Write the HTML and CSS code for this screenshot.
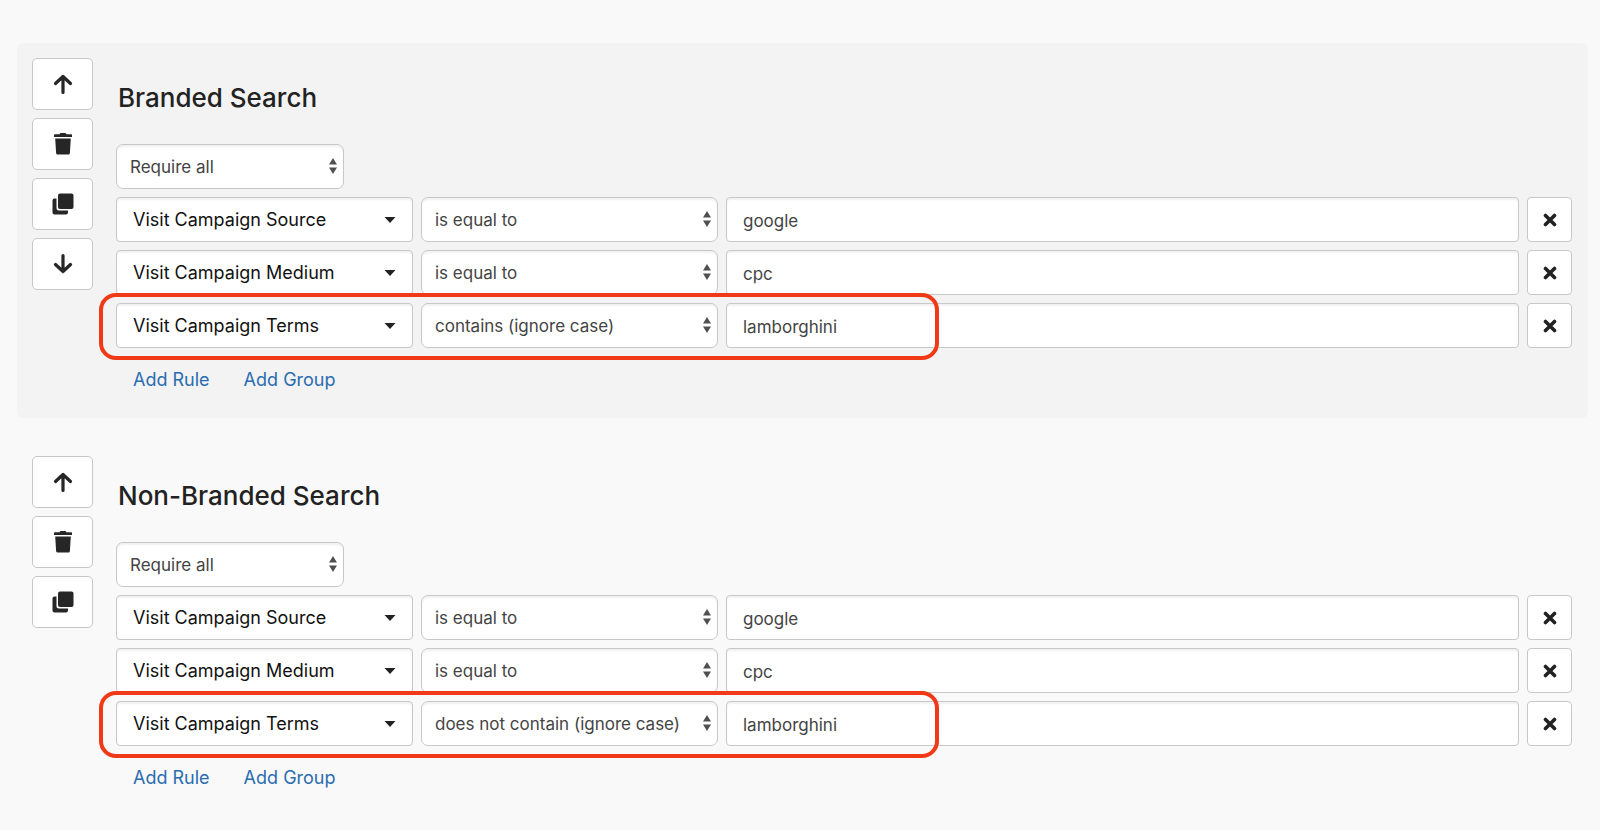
FILE: index.html
```html
<!DOCTYPE html>
<html lang="en">
<head>
<meta charset="utf-8">
<title>Channel rules</title>
<link rel="stylesheet" href="styles.css">
</head>
<body>
<svg class="sprite" aria-hidden="true">
  <symbol id="i-up" viewBox="0 0 24 24"><path d="M12 20.500V4.500M4.500 11.500L12 4.500L19.500 11.500" fill="none" stroke="currentColor" stroke-width="3.200" stroke-linejoin="round"  stroke-linecap="round"/></symbol>
  <symbol id="i-down" viewBox="0 0 24 24"><path d="M12 3.500V19.500M4.500 12.500L12 19.500L19.500 12.500" fill="none" stroke="currentColor" stroke-width="3.200" stroke-linejoin="round" stroke-linecap="round"/></symbol>
  <symbol id="i-trash" viewBox="0 0 24 24"><path d="M3 3Q3 2.200 4 2.200H8.500L9.500 1H14.500L15.500 2.200H20Q21 2.200 21 3V5H3ZM4.200 6.500H19.800L18.900 21Q18.800 22.500 17.300 22.500H6.700Q5.200 22.500 5.100 21Z" fill="currentColor"/></symbol>
  <symbol id="i-copy" viewBox="0 0 24 24"><rect x="7" y="1.500" width="15.500" height="15.500" rx="2" fill="currentColor"/><path d="M5.500 6.500H3.500Q1.500 6.500 1.500 8.500V20.500Q1.500 22.500 3.500 22.500H15Q17 22.500 17 20.500V18.500H8Q5.500 18.500 5.500 16Z" fill="currentColor"/></symbol>
  <symbol id="i-x" viewBox="0 0 14 14"><path d="M2.500 2.500L11.500 11.500M11.500 2.500L2.500 11.500" fill="none" stroke="currentColor" stroke-width="3.600" stroke-linecap="round"/></symbol>
  <symbol id="i-caret" viewBox="0 0 12 6"><path d="M0.500 0H11.500L6 6Z" fill="currentColor"/></symbol>
  <symbol id="i-sort" viewBox="0 0 8 16"><path d="M4 0L8 6.500H0ZM0 9.500H8L4 16Z" fill="currentColor"/></symbol>
</svg>
<main class="page">
  <section class="channel channel-active">
    <div class="tools">
      <button class="tool" aria-label="Move up"><svg class="icon"><use href="#i-up"/></svg></button>
      <button class="tool" aria-label="Delete"><svg class="icon"><use href="#i-trash"/></svg></button>
      <button class="tool" aria-label="Duplicate"><svg class="icon"><use href="#i-copy"/></svg></button>
      <button class="tool" aria-label="Move down"><svg class="icon"><use href="#i-down"/></svg></button>
    </div>
    <div class="rules">
      <h2 class="title">Branded Search</h2>
      <div class="select-wrap match"><select class="select" aria-label="Match mode"><option>Require all</option></select><svg class="sort"><use href="#i-sort"/></svg></div>
      <div class="rule">
        <button class="field">Visit Campaign Source<svg class="caret"><use href="#i-caret"/></svg></button>
        <div class="select-wrap"><select class="select" aria-label="Condition"><option>is equal to</option></select><svg class="sort"><use href="#i-sort"/></svg></div>
        <input class="value" type="text" value="google" aria-label="Value">
        <button class="remove" aria-label="Remove rule"><svg class="cross"><use href="#i-x"/></svg></button>
      </div>
      <div class="rule">
        <button class="field">Visit Campaign Medium<svg class="caret"><use href="#i-caret"/></svg></button>
        <div class="select-wrap"><select class="select" aria-label="Condition"><option>is equal to</option></select><svg class="sort"><use href="#i-sort"/></svg></div>
        <input class="value" type="text" value="cpc" aria-label="Value">
        <button class="remove" aria-label="Remove rule"><svg class="cross"><use href="#i-x"/></svg></button>
      </div>
      <div class="rule rule-marked">
        <button class="field">Visit Campaign Terms<svg class="caret"><use href="#i-caret"/></svg></button>
        <div class="select-wrap"><select class="select" aria-label="Condition"><option>contains (ignore case)</option></select><svg class="sort"><use href="#i-sort"/></svg></div>
        <input class="value" type="text" value="lamborghini" aria-label="Value">
        <button class="remove" aria-label="Remove rule"><svg class="cross"><use href="#i-x"/></svg></button>
      </div>
      <div class="links"><a class="link" href="#">Add Rule</a><a class="link" href="#">Add Group</a></div>
    </div>
  </section>
  <section class="channel">
    <div class="tools">
      <button class="tool" aria-label="Move up"><svg class="icon"><use href="#i-up"/></svg></button>
      <button class="tool" aria-label="Delete"><svg class="icon"><use href="#i-trash"/></svg></button>
      <button class="tool" aria-label="Duplicate"><svg class="icon"><use href="#i-copy"/></svg></button>
    </div>
    <div class="rules">
      <h2 class="title">Non-Branded Search</h2>
      <div class="select-wrap match"><select class="select" aria-label="Match mode"><option>Require all</option></select><svg class="sort"><use href="#i-sort"/></svg></div>
      <div class="rule">
        <button class="field">Visit Campaign Source<svg class="caret"><use href="#i-caret"/></svg></button>
        <div class="select-wrap"><select class="select" aria-label="Condition"><option>is equal to</option></select><svg class="sort"><use href="#i-sort"/></svg></div>
        <input class="value" type="text" value="google" aria-label="Value">
        <button class="remove" aria-label="Remove rule"><svg class="cross"><use href="#i-x"/></svg></button>
      </div>
      <div class="rule">
        <button class="field">Visit Campaign Medium<svg class="caret"><use href="#i-caret"/></svg></button>
        <div class="select-wrap"><select class="select" aria-label="Condition"><option>is equal to</option></select><svg class="sort"><use href="#i-sort"/></svg></div>
        <input class="value" type="text" value="cpc" aria-label="Value">
        <button class="remove" aria-label="Remove rule"><svg class="cross"><use href="#i-x"/></svg></button>
      </div>
      <div class="rule rule-marked">
        <button class="field">Visit Campaign Terms<svg class="caret"><use href="#i-caret"/></svg></button>
        <div class="select-wrap"><select class="select" aria-label="Condition"><option>does not contain (ignore case)</option></select><svg class="sort"><use href="#i-sort"/></svg></div>
        <input class="value" type="text" value="lamborghini" aria-label="Value">
        <button class="remove" aria-label="Remove rule"><svg class="cross"><use href="#i-x"/></svg></button>
      </div>
      <div class="links"><a class="link" href="#">Add Rule</a><a class="link" href="#">Add Group</a></div>
    </div>
  </section>
</main>
</body>
</html>
```
FILE: styles.css
```css
*, *::after { box-sizing: border-box; }

body {
  margin: 0;
  background: #f9f9f9;
  color: #222;
  font-family: Inter, "Liberation Sans", sans-serif;
  font-size: 17px;
  line-height: 24px;
}

button, select, input { font: inherit; margin: 0; }

.sprite { position: absolute; width: 0; height: 0; }

.page {
  display: flex;
  flex-direction: column;
  gap: 23px;
  padding: 43px 12px 0 17px;
}

.channel {
  display: flex;
  align-items: flex-start;
  gap: 23px;
  padding: 15px 16px 26px 15px;
  border-radius: 6px;
}

.channel-active { background: #f3f3f3; }

.tools { display: flex; flex-direction: column; gap: 8px; }

.tool {
  display: flex;
  align-items: center;
  justify-content: center;
  width: 61px;
  height: 52px;
  padding: 0;
  border: 1px solid #c8c8c8;
  border-radius: 5px;
  background: #fff;
  color: #262626;
}

.icon { width: 24px; height: 24px; }

.rules {
  flex: 1;
  min-width: 0;
  display: flex;
  flex-direction: column;
  gap: 8px;
}

.title {
  margin: 0;
  padding: 22px 2px 20px;
  font-size: 26px;
  line-height: 36px;
  font-weight: 500;
}

.rule {
  position: relative;
  display: grid;
  grid-template-columns: minmax(0, 297px) minmax(0, 297px) minmax(0, 1fr) 45px;
  gap: 8px;
}

.rule-marked::after {
  content: "";
  position: absolute;
  top: -10px;
  left: -17px;
  width: 840px;
  height: 67px;
  border: 4px solid #f03a17;
  border-radius: 17px;
  pointer-events: none;
}

.field, .select, .value, .remove {
  width: 100%;
  height: 45px;
  border: 1px solid #c8c8c8;
  border-radius: 4px;
  background: #fff;
  box-shadow: inset 0 2px 2px #f1f1f1;
}

.field {
  display: flex;
  align-items: center;
  justify-content: space-between;
  padding: 0 16px;
  color: #111;
  font-size: 18px;
}

.caret { width: 12px; height: 6px; color: #222; }

.select-wrap { position: relative; }

.match { width: 228px; }

.select {
  display: block;
  appearance: none;
  padding: 0 24px 0 13px;
  border-radius: 7px;
  color: #444;
}

.sort {
  position: absolute;
  top: 14px;
  right: 7px;
  width: 8px;
  height: 16px;
  color: #505050;
  pointer-events: none;
}

.value { padding: 2px 16px 0; color: #444; }

.remove {
  display: flex;
  align-items: center;
  justify-content: center;
  padding: 0;
  color: #222;
  box-shadow: none;
}

.cross { width: 14px; height: 14px; }

.links { display: flex; gap: 34px; padding: 12px 17px 0; }

.link { color: #2a6cb0; text-decoration: none; font-size: 18px; }
```
